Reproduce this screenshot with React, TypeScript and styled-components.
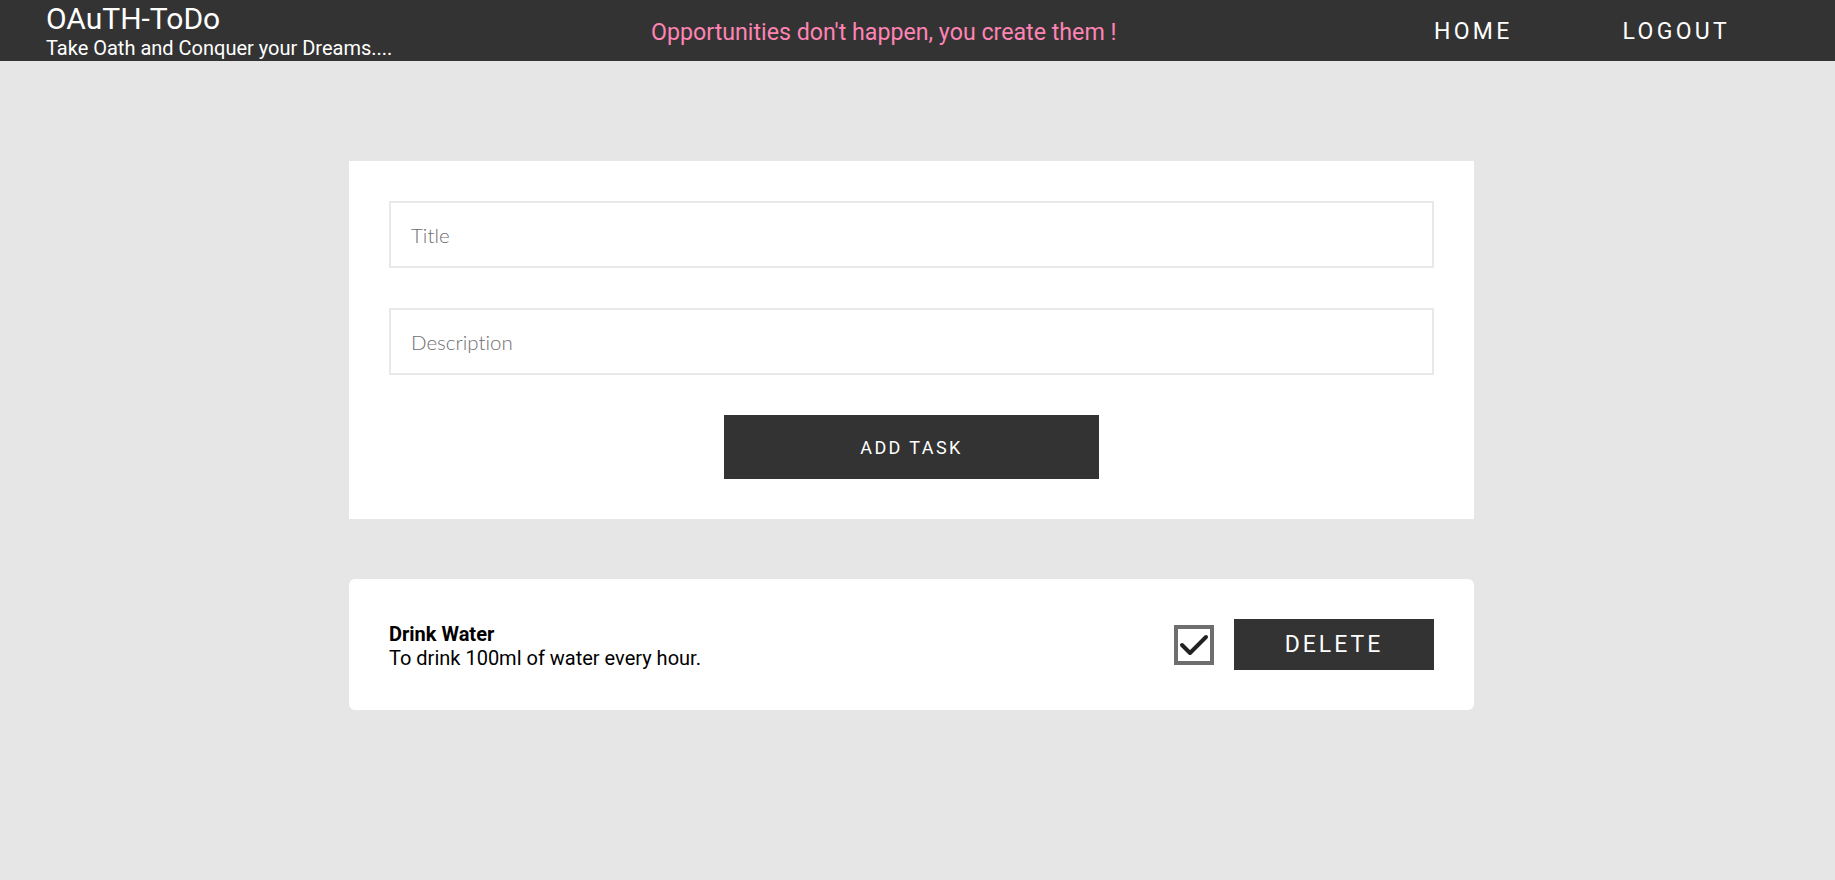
import React from "react";
import styled, { createGlobalStyle } from "styled-components";

const Global = createGlobalStyle`
  html, body { margin: 0; padding: 0; background: #e6e6e6; }
  body { font-family: Roboto, "Liberation Sans", sans-serif; }
  * { box-sizing: border-box; }
`;

const Header = styled.header`
  height: 61px;
  background: #333333;
  display: flex;
  align-items: center;
  padding: 2px 105px 0 46px;
  color: #ffffff;
`;

const Brand = styled.div`
  flex: 0 0 605px;
  display: flex;
  flex-direction: column;
  align-self: flex-start;
`;

const BrandTitle = styled.div`
  font-size: 30px;
  line-height: 33px;
  font-weight: 400;
`;

const BrandSub = styled.div`
  font-size: 20px;
  line-height: 24px;
  margin-top: 1px;
`;

const Quote = styled.div`
  color: #ff84b4;
  font-size: 23.2px;
  line-height: 26px;
`;

const Nav = styled.nav`
  margin-left: auto;
  display: flex;
  gap: 110px;
`;

const NavLink = styled.a`
  color: #ffffff;
  font-size: 23px;
  letter-spacing: 3.3px;
  text-decoration: none;
  text-transform: uppercase;
`;

const Main = styled.main`
  display: flex;
  flex-direction: column;
  gap: 60px;
  padding: 100px 0 100px 349px;
`;

const FormCard = styled.section`
  width: 1125px;
  background: #ffffff;
  padding: 40px;
  display: flex;
  flex-direction: column;
  gap: 40px;
  align-items: center;
`;

const Input = styled.input`
  width: 100%;
  height: 67px;
  border: 2px solid #e8e8e8;
  padding: 0 20px;
  font-family: Lato, "Open Sans", sans-serif;
  font-weight: 300;
  font-size: 20.5px;
  font-variant-ligatures: none;
  color: #333;
  outline: none;
  &::placeholder { color: #6f6f6f; }
`;

const DarkButton = styled.button<{ $w: number; $h: number; $fs: number; $ls: number }>`
  width: ${(p) => p.$w}px;
  height: ${(p) => p.$h}px;
  background: #333333;
  color: #ffffff;
  border: none;
  font-family: Roboto, "Liberation Sans", sans-serif;
  font-size: ${(p) => p.$fs}px;
  letter-spacing: ${(p) => p.$ls}px;
  text-transform: uppercase;
  cursor: pointer;
  flex-shrink: 0;
`;

const TaskCard = styled.article`
  width: 1125px;
  height: 131px;
  background: #ffffff;
  border-radius: 6px;
  padding: 0 40px;
  display: flex;
  align-items: center;
`;

const TaskText = styled.div`
  display: flex;
  flex-direction: column;
  color: #000;
  font-size: 20px;
  line-height: 24px;
  padding-top: 2px;
`;

const TaskTitle = styled.div`
  font-weight: 700;
`;

const TaskActions = styled.div`
  margin-left: auto;
  display: flex;
  align-items: center;
  gap: 20px;
`;

const CheckBox = styled.div`
  width: 40px;
  height: 40px;
  border: 4px solid #6e6e6e;
  background: #fff;
  display: flex;
  align-items: center;
  justify-content: center;
`;

export default function App() {
  return (
    <>
      <Global />
      <Header>
        <Brand>
          <BrandTitle>OAuTH-ToDo</BrandTitle>
          <BrandSub>Take Oath and Conquer your Dreams....</BrandSub>
        </Brand>
        <Quote>Opportunities don't happen, you create them !</Quote>
        <Nav>
          <NavLink href="#">Home</NavLink>
          <NavLink href="#">Logout</NavLink>
        </Nav>
      </Header>
      <Main>
        <FormCard>
          <Input placeholder="Title" />
          <Input placeholder="Description" />
          <DarkButton $w={375} $h={64} $fs={18} $ls={2.4}>Add Task</DarkButton>
        </FormCard>
        <TaskCard>
          <TaskText>
            <TaskTitle>Drink Water</TaskTitle>
            <div>To drink 100ml of water every hour.</div>
          </TaskText>
          <TaskActions>
            <CheckBox>
              <svg width="30" height="30" viewBox="0 0 30 30">
                <polyline points="3,15 11,23 27,7" fill="none" stroke="#222" strokeWidth="4" strokeLinecap="round" strokeLinejoin="round" />
              </svg>
            </CheckBox>
            <DarkButton $w={200} $h={51} $fs={23} $ls={3}>Delete</DarkButton>
          </TaskActions>
        </TaskCard>
      </Main>
    </>
  );
}
